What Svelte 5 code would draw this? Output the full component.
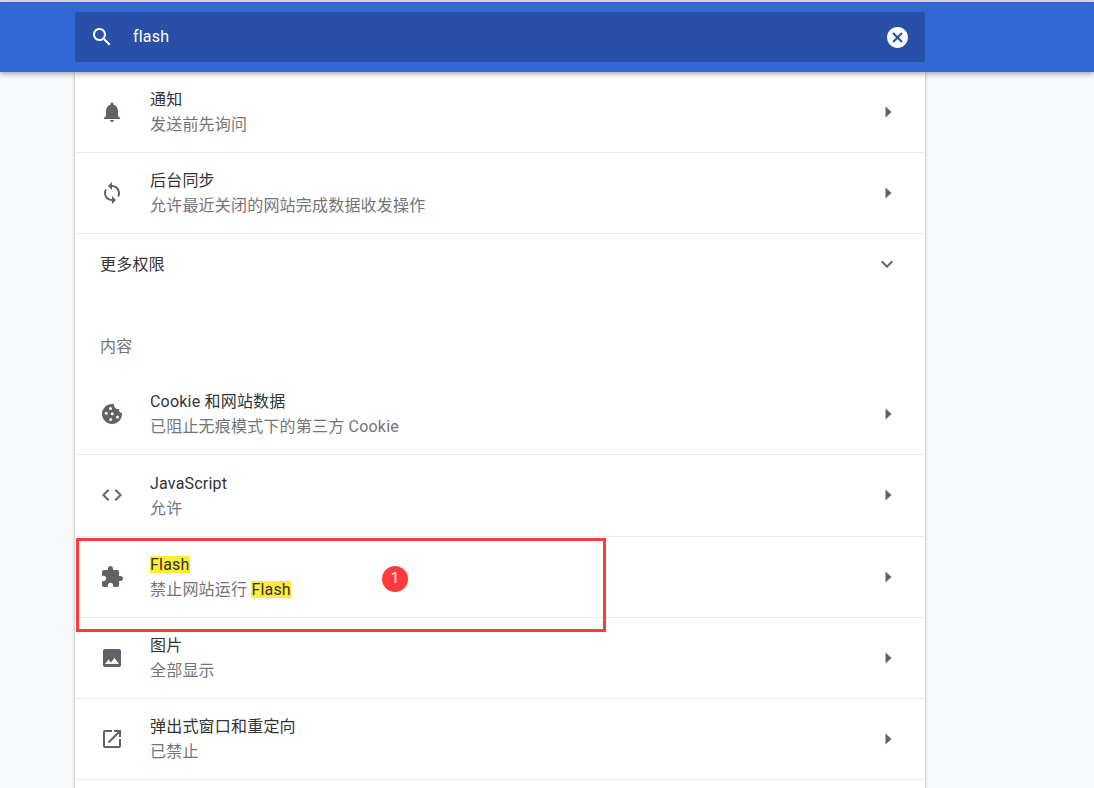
<script>
  const dot = (x, y, r = 1.5) => `M${x - r} ${y}a${r} ${r} 0 1 0 ${2 * r} 0a${r} ${r} 0 1 0 ${-2 * r} 0z`;
  const icons = {
    bell: 'M12 22c1.1 0 2-.9 2-2h-4c0 1.1.9 2 2 2zm6-6v-5c0-3.07-1.63-5.64-4.5-6.32V4c0-.83-.67-1.5-1.5-1.5s-1.5.67-1.5 1.5v.68C7.64 5.36 6 7.92 6 11v5l-2 2v1h16v-1l-2-2z',
    sync: 'M12 4V1L8 5l4 4V6c3.31 0 6 2.69 6 6 0 1.01-.25 1.97-.7 2.8l1.46 1.46C19.54 15.03 20 13.57 20 12c0-4.42-3.58-8-8-8zm0 14c-3.31 0-6-2.69-6-6 0-1.01.25-1.97.7-2.8L5.24 7.74C4.46 8.97 4 10.43 4 12c0 4.42 3.58 8 8 8v3l4-4-4-4v3z',
    cookie: 'M21.95 10.99c-1.79-.03-3.7-1.95-2.68-4.22-2.97 1-5.78-1.59-5.19-4.56C7.11.74 2 6.41 2 12c0 5.52 4.48 10 10 10 5.89 0 10.54-5.08 9.95-11.01z' +
      dot(10.5, 6.5) + dot(6.2, 11.3) + dot(12.3, 11.7) + dot(10.7, 17.5) + dot(17.5, 15),
    code: 'M9.4 16.6L4.8 12l4.6-4.6L8 6l-6 6 6 6 1.4-1.4zm5.2 0l4.6-4.6-4.6-4.6L16 6l6 6-6 6-1.4-1.4z',
    ext: 'M20.5 11H19V7c0-1.1-.9-2-2-2h-4V3.5C13 2.12 11.88 1 10.5 1S8 2.12 8 3.5V5H4c-1.1 0-1.99.9-1.99 2v3.8H3.5c1.49 0 2.7 1.21 2.7 2.7s-1.21 2.7-2.7 2.7H2V20c0 1.1.9 2 2 2h3.8v-1.5c0-1.49 1.21-2.7 2.7-2.7 1.49 0 2.7 1.21 2.7 2.7V22H17c1.1 0 2-.9 2-2v-4h1.5c1.38 0 2.5-1.12 2.5-2.5S21.88 11 20.5 11z',
    photo: 'M21 19V5c0-1.1-.9-2-2-2H5c-1.1 0-2 .9-2 2v14c0 1.1.9 2 2 2h14c1.1 0 2-.9 2-2zM8.5 13.5l2.5 3.01L14.5 12l4.5 6H5l3.5-4.5z',
    open: 'M19 19H5V5h7V3H5c-1.11 0-2 .9-2 2v14c0 1.1.89 2 2 2h14c1.1 0 2-.9 2-2v-7h-2v7zM14 3v2h3.59l-9.83 9.83 1.41 1.41L19 6.41V10h2V3h-7z'
  };
  const groupA = [
    { icon: 'bell', title: '通知', sub: '发送前先询问' },
    { icon: 'sync', title: '后台同步', sub: '允许最近关闭的网站完成数据收发操作' }
  ];
  const groupB = [
    { icon: 'cookie', title: 'Cookie 和网站数据', sub: '已阻止无痕模式下的第三方 Cookie' },
    { icon: 'code', title: 'JavaScript', sub: '允许' },
    { icon: 'ext', title: 'Flash', sub: '禁止网站运行 ', mark: 'Flash', hl: true },
    { icon: 'photo', title: '图片', sub: '全部显示' },
    { icon: 'open', title: '弹出式窗口和重定向', sub: '已禁止' }
  ];
</script>

{#snippet row(r, tight)}
  <div class="row" class:tight>
    <svg class="icon" viewBox="0 0 24 24"><path d={icons[r.icon]} /></svg>
    <div class="text">
      <div class="title">{#if r.hl}<mark>{r.title}</mark>{:else}{r.title}{/if}</div>
      <div class="sub">{r.sub}{#if r.mark}<mark>{r.mark}</mark>{/if}</div>
    </div>
    <svg class="arrow" viewBox="0 0 24 24"><path d="M9.5 6.5l6 5.5-6 5.5z" /></svg>
  </div>
{/snippet}

<div class="page">
  <header>
    <div class="search">
      <svg class="search-icon" viewBox="0 0 24 24"><path d="M15.5 14h-.79l-.28-.27C15.41 12.59 16 11.11 16 9.5 16 5.91 13.09 3 9.5 3S3 5.91 3 9.5 5.91 16 9.5 16c1.61 0 3.09-.59 4.23-1.57l.27.28v.79l5 4.99L20.49 19l-4.99-5zm-6 0C7.01 14 5 11.99 5 9.5S7.01 5 9.5 5 14 7.01 14 9.5 11.99 14 9.5 14z" /></svg>
      <span class="query">flash</span>
      <svg class="clear" viewBox="0 0 24 24"><path d="M12 2C6.47 2 2 6.47 2 12s4.47 10 10 10 10-4.47 10-10S17.53 2 12 2zm5 13.59L15.59 17 12 13.41 8.41 17 7 15.59 10.59 12 7 8.41 8.41 7 12 10.59 15.59 7 17 8.41 13.41 12 17 15.59z" /></svg>
    </div>
  </header>

  <main class="card">
    {#each groupA as r}{@render row(r, true)}{/each}
    <div class="row more">
      <span class="more-label">更多权限</span>
      <svg class="chev" viewBox="0 0 24 24"><path d="M16.59 8.59L12 13.17 7.41 8.59 6 10l6 6 6-6z" /></svg>
    </div>
    <div class="section">内容</div>
    {#each groupB as r}{@render row(r, false)}{/each}
    <div class="row"></div>
  </main>

  <div class="callout"></div>
  <div class="badge">1</div>
</div>

<style>
  :global(body) {
    margin: 0;
    background: #f8f9fa;
  }
  .page {
    position: relative;
    height: 788px;
    overflow: hidden;
    padding-top: 2px;
    box-sizing: border-box;
    background: #f8f9fa;
    font-family: Roboto, "Noto Sans CJK SC", sans-serif;
    font-size: 16px;
    color: #333;
    display: flex;
    flex-direction: column;
  }
  .page::before {
    content: "";
    position: absolute;
    left: 0;
    right: 0;
    top: 0;
    height: 2px;
    background: #dcdcdc;
  }
  header {
    flex: none;
    position: relative;
    z-index: 2;
    height: 70px;
    box-sizing: border-box;
    padding: 10px 169px 10px 75px;
    background: #3367d6;
    box-shadow: 0 2px 5px rgba(60, 64, 67, 0.45);
  }
  .search {
    height: 50px;
    display: flex;
    align-items: center;
    border-radius: 3px;
    background: #2850a7;
    padding: 0 15px;
  }
  .search-icon {
    width: 24px;
    height: 24px;
    fill: #fff;
    flex: none;
  }
  .query {
    flex: 1;
    margin-left: 19px;
    color: #fff;
    font-size: 16px;
    letter-spacing: 0.2px;
    margin-top: -1px;
  }
  .clear {
    width: 25px;
    height: 25px;
    fill: #fff;
    flex: none;
  }
  .card {
    width: 850px;
    margin-left: 75px;
    flex: 1;
    background: #fff;
    box-shadow: 0 1px 2px rgba(60, 64, 67, 0.3), 0 1px 3px 1px rgba(60, 64, 67, 0.15);
  }
  .row {
    height: 80.25px;
    box-sizing: content-box;
    border-bottom: 1px solid #ececec;
    padding: 0 25px;
    display: flex;
    align-items: center;
  }
  .tight {
    height: 80px;
  }
  .more {
    height: 60px;
    justify-content: space-between;
    border-bottom: 0;
  }
  .more-label {
    font-size: 16px;
    letter-spacing: 0.2px;
    margin-top: -3px;
  }
  .icon {
    width: 24px;
    height: 24px;
    fill: #5f6368;
    fill-rule: evenodd;
    flex: none;
  }
  .text {
    flex: 1;
    margin-left: 26px;
    padding-top: 1.4px;
  }
  .title {
    font-size: 16px;
    line-height: 20px;
    letter-spacing: 0.2px;
    color: #333;
  }
  .sub {
    font-size: 16px;
    line-height: 20px;
    letter-spacing: 0.2px;
    margin-top: 5px;
    color: #757575;
  }
  mark {
    display: inline-block;
    line-height: 17px;
    background: #ffeb3b;
    color: #333;
  }
  .arrow {
    width: 24px;
    height: 24px;
    fill: #5f6368;
    flex: none;
  }
  .chev {
    width: 24px;
    height: 24px;
    fill: #5f6368;
    flex: none;
    margin-right: 1px;
  }
  .section {
    height: 80px;
    box-sizing: border-box;
    padding: 43px 25px 0;
    font-size: 16px;
    line-height: 20px;
    letter-spacing: 0.2px;
    color: #757575;
  }
  .callout {
    position: absolute;
    left: 76px;
    top: 538px;
    width: 524px;
    height: 88px;
    border: 3px solid #ff3b3b;
    z-index: 3;
  }
  .badge {
    position: absolute;
    left: 382px;
    top: 566px;
    width: 26px;
    height: 26px;
    border-radius: 50%;
    background: #ff3b3b;
    color: #fff;
    font-size: 15px;
    line-height: 25px;
    text-align: center;
    z-index: 3;
  }
</style>
